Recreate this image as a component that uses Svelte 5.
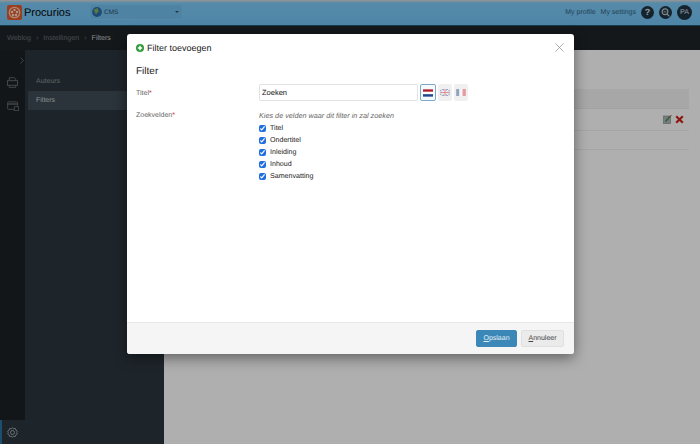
<script>
	const fields = ["Titel", "Ondertitel", "Inleiding", "Inhoud", "Samenvatting"];
</script>

<div class="page">
	<header class="topbar">
		<div class="logo">
			<svg width="15" height="15" viewBox="0 0 15 15">
				<rect width="15" height="15" rx="2" fill="#e0592a" />
				<circle cx="7.5" cy="7.5" r="5.2" fill="none" stroke="#f4c4ae" stroke-width="1.3" />
				<circle cx="7.5" cy="5" r="1.2" fill="#f7dccf" />
				<circle cx="5" cy="7" r="1.2" fill="#f7dccf" />
				<circle cx="10" cy="7" r="1.2" fill="#f7dccf" />
				<circle cx="6" cy="10" r="1.2" fill="#f7dccf" />
				<circle cx="9" cy="10" r="1.2" fill="#f7dccf" />
			</svg>
			<span>Procurios</span>
		</div>
		<div class="app-select">
			<svg width="10" height="10" viewBox="0 0 9 9">
				<circle cx="4.5" cy="4.5" r="4.4" fill="#2b6ca8" />
				<path d="M1.5 2.5 L5 0.8 L6 4 L3.5 6.5 Z" fill="#7fb05a" />
			</svg>
			<span class="app-name">CMS</span>
			<span class="caret"></span>
		</div>
		<nav class="usernav">
			<span>My profile</span>
			<span>My settings</span>
			<span class="round">?</span>
			<span class="round">
				<svg width="9" height="9" viewBox="0 0 9 9" fill="none" stroke="#b9c4ca" stroke-width="1.2">
					<circle cx="4" cy="3.8" r="2.9" />
					<path d="M6 6 L8.4 8.4" />
					<path d="M2.6 3.8 H5.4" stroke-width="0.9" />
				</svg>
			</span>
			<span class="round avatar">PA</span>
		</nav>
	</header>

	<div class="crumbs">
		<span>Weblog</span>
		<i>›</i>
		<span>Instellingen</span>
		<i>›</i>
		<b>Filters</b>
	</div>

	<div class="main">
		<aside class="rail">
			<div class="rail-top">
				<svg class="chev" width="4" height="7" viewBox="0 0 4 7" fill="none" stroke="#5a6265">
					<path d="M0.5 0.5 L3.5 3.5 L0.5 6.5" />
				</svg>
				<svg width="11" height="11" viewBox="0 0 12 12" fill="none" stroke="#666d70">
					<path d="M2.5 4 V0.8 H8 L9.5 2.3 V4" />
					<rect x="0.5" y="4" width="11" height="5" />
					<path d="M2.5 9 V11.3 H9.5 V9" />
				</svg>
				<svg width="14" height="10" viewBox="0 0 14 12" fill="none" stroke="#666d70">
					<rect x="0.5" y="1" width="12" height="9" rx="1" />
					<path d="M0.5 3.6 H12.5" stroke-width="1.6" />
					<rect x="8.5" y="7" width="5" height="4.5" fill="#14191c" />
				</svg>
			</div>
			<div class="rail-bottom">
				<svg width="11" height="11" viewBox="0 0 11 11" fill="none" stroke="#9aa1a4">
					<path d="M5.5 0.6 L6.6 1.8 L8.4 1.5 L8.9 3.2 L10.4 4.2 L9.7 5.5 L10.4 6.8 L8.9 7.8 L8.4 9.5 L6.6 9.2 L5.5 10.4 L4.4 9.2 L2.6 9.5 L2.1 7.8 L0.6 6.8 L1.3 5.5 L0.6 4.2 L2.1 3.2 L2.6 1.5 L4.4 1.8 Z" />
					<circle cx="5.5" cy="5.5" r="2" />
				</svg>
			</div>
		</aside>
		<aside class="subnav">
			<div class="subitem">Auteurs</div>
			<div class="subitem active">Filters</div>
		</aside>
		<main class="content">
			<div class="table-head"></div>
			<div class="table-row first">
				<svg width="9" height="9" viewBox="0 0 9 9">
					<rect x="0.5" y="1" width="7" height="7.5" fill="#a9b2b8" stroke="#7a8388" stroke-width="0.6" />
					<path d="M2.5 6.5 L7 1.5" stroke="#3f8f3a" stroke-width="1.4" />
					<path d="M7 1.5 L8.5 0.5" stroke="#a83a2a" stroke-width="1" />
				</svg>
				<svg width="9" height="9" viewBox="0 0 9 9">
					<path d="M1.2 1.2 L7.8 7.8 M7.8 1.2 L1.2 7.8" stroke="#c8241a" stroke-width="2.2" />
				</svg>
			</div>
			<div class="table-row"></div>
		</main>
	</div>

	<div class="overlay">
		<div class="modal">
			<div class="modal-head">
				<h1>
					<svg width="8" height="8" viewBox="0 0 8 8">
						<circle cx="4" cy="4" r="4" fill="#2f9a3a" />
						<path d="M4 1.8 V6.2 M1.8 4 H6.2" stroke="#fff" stroke-width="1.5" />
					</svg>
					Filter toevoegen
				</h1>
				<svg class="close" width="9" height="9" viewBox="0 0 9 9" stroke="#999" stroke-width="0.8">
					<path d="M0.4 0.4 L8.6 8.6 M8.6 0.4 L0.4 8.6" />
				</svg>
			</div>
			<div class="modal-body">
				<h2>Filter</h2>
				<div class="row title-row">
					<div class="label">Titel<em>*</em></div>
					<div class="title-field">
						<input type="text" value="Zoeken" />
						<span class="flag selected">
							<svg width="10" height="8" viewBox="0 0 11 8">
								<rect width="11" height="2.7" fill="#ae1c28" />
								<rect y="2.7" width="11" height="2.6" fill="#fff" />
								<rect y="5.3" width="11" height="2.7" fill="#21468b" />
							</svg>
						</span>
						<span class="flag dim">
							<svg width="10" height="7" viewBox="0 0 11 8">
								<rect width="11" height="8" fill="#2a3f8f" />
								<path d="M0 0 L11 8 M11 0 L0 8" stroke="#fff" stroke-width="1.4" />
								<path d="M5.5 0 V8 M0 4 H11" stroke="#fff" stroke-width="2.6" />
								<path d="M5.5 0 V8 M0 4 H11" stroke="#c8202f" stroke-width="1.4" />
							</svg>
						</span>
						<span class="flag dim">
							<svg width="10" height="7" viewBox="0 0 11 8">
								<rect width="3.7" height="8" fill="#21468b" />
								<rect x="3.7" width="3.6" height="8" fill="#fff" />
								<rect x="7.3" width="3.7" height="8" fill="#d8343f" />
							</svg>
						</span>
					</div>
				</div>
				<div class="row">
					<div class="label">Zoekvelden<em>*</em></div>
					<div class="fields">
						<p class="hint">Kies de velden waar dit filter in zal zoeken</p>
						{#each fields as field}
							<label class="check">
								<input type="checkbox" checked />
								{field}
							</label>
						{/each}
					</div>
				</div>
			</div>
			<div class="modal-foot">
				<button class="btn primary"><u>O</u>pslaan</button>
				<button class="btn"><u>A</u>nnuleer</button>
			</div>
		</div>
	</div>
</div>

<style>
	:global(body) {
		margin: 0;
	}

	.page {
		position: relative;
		width: 700px;
		height: 444px;
		overflow: hidden;
		display: flex;
		flex-direction: column;
		font-family: "Liberation Sans", Arial, sans-serif;
		text-rendering: geometricPrecision;
		background: #fff;
	}

	.topbar {
		height: 26px;
		box-sizing: border-box;
		border-bottom: 1px solid #1f5575;
		background: linear-gradient(#d8d8d8 0, #7cc6f2 3px, #70c0f0 100%);
		display: flex;
		align-items: center;
		padding: 0 8px 0 7px;
	}

	.logo {
		display: flex;
		align-items: center;
		gap: 2px;
		width: 82px;
		margin-top: -1px;
	}

	.logo span {
		font-size: 11px;
		line-height: 15px;
		padding-top: 3px;
		color: #050505;
	}

	.app-select {
		width: 94px;
		height: 16px;
		margin-top: -1px;
		box-sizing: border-box;
		border-radius: 4px;
		background: #70bcea;
		box-shadow: inset 0 0 0 1px #7cc6f2;
		display: flex;
		align-items: center;
		padding: 0 4px 0 3px;
		gap: 2px;
	}

	.app-name {
		font-size: 6.5px;
		color: #2c4f64;
		flex: 1;
	}

	.caret {
		width: 0;
		height: 0;
		border-left: 2px solid transparent;
		border-right: 2px solid transparent;
		border-top: 2px solid #2c4f64;
	}

	.usernav {
		margin-left: auto;
		display: flex;
		align-items: center;
		gap: 5px;
		font-size: 7px;
		color: #315f7c;
		margin-top: -1px;
	}

	.round {
		width: 13px;
		height: 13px;
		border-radius: 50%;
		background: #1e3442;
		color: #d6dee2;
		font-size: 9px;
		font-weight: bold;
		display: flex;
		align-items: center;
		justify-content: center;
	}

	.avatar {
		width: 15px;
		height: 15px;
		font-size: 7px;
		font-weight: normal;
	}

	.crumbs {
		height: 24px;
		background: #1d2328;
		display: flex;
		align-items: center;
		gap: 5px;
		padding-left: 7px;
		font-size: 7.1px;
		color: #6a7074;
	}

	.crumbs i {
		font-style: normal;
	}

	.crumbs b {
		font-weight: normal;
		color: #c2c6c8;
	}

	.main {
		flex: 1;
		display: flex;
		min-height: 0;
	}

	.rail {
		width: 25px;
		background: #1a2023;
		display: flex;
		flex-direction: column;
		justify-content: space-between;
	}

	.rail-top {
		display: flex;
		flex-direction: column;
		align-items: center;
		padding-top: 7px;
	}

	.rail-top .chev {
		align-self: flex-end;
		margin-right: 1px;
		margin-bottom: 13px;
	}

	.rail-top svg + svg + svg {
		margin-top: 13px;
	}

	.rail-bottom {
		height: 24px;
		box-sizing: border-box;
		border-left: 2px solid #2c6f9c;
		background: #2c363d;
		display: flex;
		align-items: center;
		padding-left: 5px;
	}

	.subnav {
		width: 139px;
		background: #2c363d;
		padding-top: 22px;
		box-sizing: border-box;
	}

	.subitem {
		height: 19px;
		line-height: 19px;
		margin-left: 3px;
		padding-left: 8px;
		font-size: 7px;
		color: #888e92;
	}

	.subitem.active {
		background: #3e4b54;
		color: #c2c7ca;
	}

	.content {
		flex: 1;
		background: #fbfbfb;
		padding: 39px 11px 0 0;
	}

	.table-head {
		height: 19px;
		background: #f0f0f0;
		border-bottom: 1px solid #e8e8e8;
	}

	.table-row {
		height: 18px;
		border-bottom: 1px solid #ececec;
		display: flex;
		justify-content: flex-end;
		align-items: center;
		gap: 3px;
		padding-right: 5px;
	}

	.table-row.first {
		height: 22px;
		padding-bottom: 1px;
		box-sizing: border-box;
	}

	.overlay {
		position: absolute;
		inset: 0;
		background: rgba(0, 0, 0, 0.3);
	}

	.modal {
		position: absolute;
		left: 127px;
		top: 34px;
		width: 447px;
		height: 320px;
		background: #fff;
		border-radius: 3px;
		box-shadow: 0 4px 14px rgba(0, 0, 0, 0.45);
		display: flex;
		flex-direction: column;
	}

	.modal-head {
		height: 27px;
		display: flex;
		align-items: center;
		justify-content: space-between;
		padding: 0 10px 0 9px;
	}

	h1 {
		margin: 0;
		font-size: 9px;
		font-weight: normal;
		color: #222;
		display: flex;
		align-items: center;
		gap: 3px;
	}

	.modal-body {
		flex: 1;
		padding: 5px 9px;
	}

	h2 {
		margin: 0 0 6px;
		font-size: 10px;
		line-height: 12px;
		font-weight: normal;
		color: #222;
	}

	.row {
		display: flex;
	}

	.title-row {
		height: 17px;
		margin-bottom: 10px;
	}

	.label {
		width: 123px;
		font-size: 7px;
		line-height: 19px;
		color: #666;
	}

	.label em {
		color: #d4182a;
		font-style: normal;
	}

	.row + .row .label {
		line-height: 10px;
	}

	.title-field {
		display: flex;
		gap: 2px;
	}

	.title-field input {
		box-sizing: border-box;
		width: 159px;
		height: 17px;
		border: 1px solid #e2e2e2;
		border-radius: 2px;
		padding: 0 2px;
		margin: 0;
		font: 7.5px "Liberation Sans", Arial, sans-serif;
		text-rendering: geometricPrecision;
		color: #111;
		outline: none;
	}

	.flag {
		width: 14px;
		height: 17px;
		box-sizing: border-box;
		border-radius: 2px;
		background: #f0f0f0;
		display: flex;
		align-items: center;
		justify-content: center;
	}

	.flag.selected {
		width: 16px;
		background: #f6f9fb;
		border: 1px solid #7aa9c9;
	}

	.flag.dim svg {
		opacity: 0.45;
	}

	.hint {
		margin: 0 0 1px;
		font-size: 7.25px;
		line-height: 10px;
		font-style: italic;
		color: #666;
	}

	.check {
		display: flex;
		align-items: center;
		height: 12px;
		font-size: 7.1px;
		color: #222;
	}

	.check input {
		width: 7px;
		height: 7px;
		margin: 0 4px 0 0;
		accent-color: #1f6fe0;
	}

	.modal-foot {
		height: 32px;
		box-sizing: border-box;
		background: #f5f5f5;
		border-top: 1px solid #e8e8e8;
		border-radius: 0 0 3px 3px;
		display: flex;
		align-items: center;
		justify-content: flex-end;
		gap: 4px;
		padding: 0 10px 0 0;
	}

	.btn {
		height: 17px;
		padding: 0;
		width: 43px;
		box-sizing: border-box;
		border: 1px solid #e0e0e0;
		border-radius: 2px;
		background: #ebebeb;
		font: 7px "Liberation Sans", Arial, sans-serif;
		text-rendering: geometricPrecision;
		color: #444;
	}

	.btn.primary {
		width: 41px;
		background: #3a87b8;
		border-color: #3a87b8;
		color: #e4eff6;
	}
</style>
